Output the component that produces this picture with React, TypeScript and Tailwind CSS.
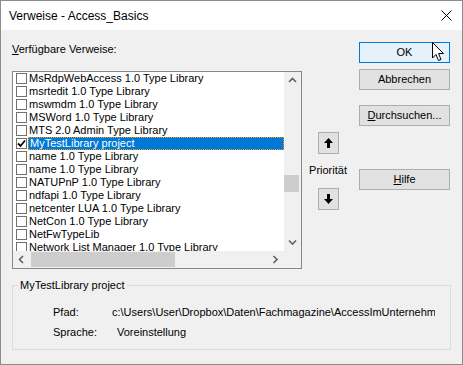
import React from "react"

const items = [
  "MsRdpWebAccess 1.0 Type Library",
  "msrtedit 1.0 Type Library",
  "mswmdm 1.0 Type Library",
  "MSWord 1.0 Type Library",
  "MTS 2.0 Admin Type Library",
  "MyTestLibrary project",
  "name 1.0 Type Library",
  "name 1.0 Type Library",
  "NATUPnP 1.0 Type Library",
  "ndfapi 1.0 Type Library",
  "netcenter LUA 1.0 Type Library",
  "NetCon 1.0 Type Library",
  "NetFwTypeLib",
  "Network List Manager 1.0 Type Library",
]

const SELECTED = 5

function Chevron({ dir }: { dir: "up" | "down" | "left" | "right" }) {
  const paths = {
    up: "M1 5 L4.5 1.5 L8 5",
    down: "M1 1.5 L4.5 5 L8 1.5",
    left: "M5 1 L1.5 4.5 L5 8",
    right: "M1.5 1 L5 4.5 L1.5 8",
  }
  const vertical = dir === "up" || dir === "down"
  return (
    <svg width={vertical ? 9 : 7} height={vertical ? 7 : 9} viewBox={vertical ? "0 0 9 7" : "0 0 7 9"}>
      <path d={paths[dir]} fill="none" stroke="#606060" strokeWidth="1.6" />
    </svg>
  )
}

function Arrow({ down }: { down?: boolean }) {
  return (
    <svg width="9" height="10" viewBox="0 0 9 10" className={down ? "rotate-180" : ""}>
      <path d="M4.5 0 L9 5 L6 5 L6 10 L3 10 L3 5 L0 5 Z" fill="#000" />
    </svg>
  )
}

function Button({ children, primary }: { children: React.ReactNode; primary?: boolean }) {
  return (
    <div
      className={
        primary
          ? "h-[21px] w-[91px] flex items-center justify-center border border-[#0078d7] bg-[#e5f1fb]"
          : "h-[21px] w-[91px] flex items-center justify-center border border-[#adadad] bg-[#e1e1e1]"
      }
    >
      {children}
    </div>
  )
}

export default function App() {
  return (
    <div
      className="relative w-[463px] h-[365px] flex flex-col border border-[#8c8c8c] text-[11px] text-black bg-[#f0f0f0]"
      style={{ fontFamily: '"Liberation Sans", Arial, sans-serif' }}
    >
      {/* Title bar */}
      <div className="h-[29px] shrink-0 bg-white flex items-center pl-[8px] pr-[10px]">
        <span className="text-[12px] flex-1">Verweise - Access_Basics</span>
        <svg width="11" height="11" viewBox="0 0 11 11">
          <path d="M0.5 0.5 L10.5 10.5 M10.5 0.5 L0.5 10.5" stroke="#000" strokeWidth="1" />
        </svg>
      </div>

      {/* Body */}
      <div className="flex-1 flex flex-col px-[11px]">
        <div className="flex items-start mt-[12px]">
          {/* List column */}
          <div className="w-[290px] flex flex-col">
            <div className="h-[14px] leading-[14px]">
              <u>V</u>erfügbare Verweise:
            </div>
            <div className="mt-[15px] h-[198px] border border-[#828790] bg-white flex flex-col">
              <div className="flex flex-1 min-h-0">
                <div className="flex-1 overflow-hidden">
                  {items.map((name, i) => (
                    <div key={i} className="h-[13px] flex items-center whitespace-nowrap">
                      <div className="ml-[3px] w-[11px] h-[11px] shrink-0 border border-[#707070] bg-white flex items-center justify-center">
                        {i === SELECTED && (
                          <svg width="9" height="9" viewBox="0 0 9 9">
                            <path d="M1 4.5 L3.5 7 L8 1.5" fill="none" stroke="#000" strokeWidth="1.8" />
                          </svg>
                        )}
                      </div>
                      {i === SELECTED ? (
                        <span className="ml-[1px] flex-1 h-[13px] leading-[11px] pl-[1px] bg-[#0078d7] text-white border border-dotted border-[#f7a000]">
                          {name}
                        </span>
                      ) : (
                        <span className="ml-[2px] leading-[13px]">{name}</span>
                      )}
                    </div>
                  ))}
                </div>
                {/* vertical scrollbar */}
                <div className="w-[17px] bg-[#f0f0f0] flex flex-col">
                  <div className="h-[17px] flex items-center justify-center">
                    <Chevron dir="up" />
                  </div>
                  <div className="flex-1 flex flex-col">
                    <div className="h-[86px]" />
                    <div className="h-[17px] w-[15px] bg-[#cdcdcd]" />
                  </div>
                  <div className="h-[17px] flex items-center justify-center">
                    <Chevron dir="down" />
                  </div>
                </div>
              </div>
              {/* horizontal scrollbar */}
              <div className="h-[17px] flex bg-[#f0f0f0]">
                <div className="w-[17px] flex items-center justify-center">
                  <Chevron dir="left" />
                </div>
                <div className="flex-1 flex items-center">
                  <div className="ml-[1px] w-[144px] h-[15px] bg-[#cdcdcd]" />
                </div>
                <div className="w-[17px] flex items-center justify-center">
                  <Chevron dir="right" />
                </div>
                <div className="w-[17px] bg-[#f0f0f0]" />
              </div>
            </div>
          </div>

          {/* Priority column */}
          <div className="w-[52px] flex flex-col items-center">
            <div className="mt-[90px] w-[21px] h-[22px] border border-[#adadad] bg-[#e1e1e1] flex items-center justify-center">
              <Arrow />
            </div>
            <div className="mt-[9px] h-[14px] leading-[14px]">Priorität</div>
            <div className="mt-[11px] w-[21px] h-[22px] border border-[#adadad] bg-[#e1e1e1] flex items-center justify-center">
              <Arrow down />
            </div>
          </div>

          {/* Buttons column */}
          <div className="ml-[5px] flex flex-col">
            <Button primary>OK</Button>
            <div className="mt-[6px]">
              <Button>Abbrechen</Button>
            </div>
            <div className="mt-[15px]">
              <Button>
                <span>
                  <u>D</u>urchsuchen...
                </span>
              </Button>
            </div>
            <div className="mt-[43px]">
              <Button>
                <span>
                  <u>H</u>ilfe
                </span>
              </Button>
            </div>
          </div>
        </div>

        {/* Group box */}
        <fieldset className="mt-[9px] w-[439px] h-[72px] border border-[#dcdcdc]">
          <legend className="ml-[5px] px-[2px] leading-[14px]">MyTestLibrary project</legend>
          <div className="pl-[40px] mt-[10px] h-[20px] flex items-center">
            <span className="w-[59px]">Pfad:</span>
            <span className="w-[323px] overflow-hidden whitespace-nowrap">
              c:\Users\User\Dropbox\Daten\Fachmagazine\AccessImUnternehmen\MyTestLibrary.accdb
            </span>
          </div>
          <div className="pl-[40px] h-[20px] flex items-center">
            <span className="w-[59px]">Sprache:</span>
            <span className="pl-[5px]">Voreinstellung</span>
          </div>
        </fieldset>
      </div>

      {/* Mouse pointer over OK */}
      <svg className="absolute left-[431px] top-[41px]" width="13" height="20" viewBox="0 0 13 20">
        <path
          d="M0.5 0.5 L0.5 16 L4 12.5 L6.5 18.5 L9 17.5 L6.5 11.5 L11.5 11.5 Z"
          fill="#fff"
          stroke="#000"
          strokeWidth="1"
          strokeLinejoin="miter"
        />
      </svg>
    </div>
  )
}
